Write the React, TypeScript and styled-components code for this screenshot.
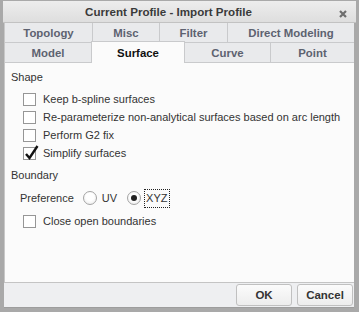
import React from 'react';
import styled, { createGlobalStyle } from 'styled-components';

const GlobalStyle = createGlobalStyle`
    html, body {
        margin: 0;
        padding: 0;
        background: #ffffff;
    }
    * {
        box-sizing: border-box;
    }
`;

const Window = styled.div`
    width: 359px;
    height: 312px;
    background: #a9a9a9;
    padding: 1px 5px 4px 4px;
    display: flex;
    flex-direction: column;
    font-family: "Liberation Sans", Arial, sans-serif;
    color: #333333;
`;

const TitleBar = styled.div`
    height: 22px;
    flex: none;
    position: relative;
    display: flex;
    align-items: center;
    justify-content: center;
    margin: 0 -2px 0 -1px;
    padding-right: 22px;
    background: linear-gradient(#ededed, #dedede);
    border-bottom: 1px solid #c2c2c2;
    font-size: 11.6px;
    font-weight: bold;
    color: #3a3a3a;
`;

const CloseButton = styled.svg`
    position: absolute;
    right: 9px;
    top: 9px;
`;

const Body = styled.div`
    flex: 1;
    display: flex;
    flex-direction: column;
    background: #fbfbfb;
    border-left: 1px solid #c8c8c8;
`;

const TabRow = styled.div<{ $cols: string }>`
    display: grid;
    grid-template-columns: ${p => p.$cols};
    height: 20px;
    flex: none;
    background: #e9eaec;
    border-bottom: 1px solid #c9cacc;
`;

const Tab = styled.div<{ $selected?: boolean; $last?: boolean }>`
    display: flex;
    align-items: center;
    justify-content: center;
    font-size: 11.4px;
    font-weight: bold;
    color: ${p => (p.$selected ? '#111111' : '#5d6270')};
    border-right: ${p => (p.$last ? 'none' : '1px solid #c9cacc')};
    background: ${p => (p.$selected ? '#fbfbfb' : 'transparent')};
    ${p => p.$selected && `
        margin-top: -2px;
        margin-bottom: -1px;
        margin-left: -1px;
        border-left: 1px solid #c9cacc;
        border-top: 1px solid #c9cacc;
        padding-top: 1px;
    `}
`;

const Content = styled.div`
    flex: 1;
    display: flex;
    flex-direction: column;
    padding: 6px 0 0 6px;
`;

const SectionLabel = styled.div<{ $gap?: number }>`
    font-size: 11px;
    line-height: 16px;
    height: 16px;
    margin-top: ${p => p.$gap || 0}px;
`;

const Group = styled.div<{ $gap?: number }>`
    display: flex;
    flex-direction: column;
    padding-left: 12px;
    margin-top: ${p => p.$gap || 0}px;
`;

const CheckRow = styled.div`
    display: flex;
    align-items: center;
    gap: 7px;
    height: 18px;
    font-size: 11px;
`;

const Box = styled.span`
    position: relative;
    width: 13px;
    height: 13px;
    flex: none;
    background: #ffffff;
    border: 1px solid #969696;
`;

const CheckMark = styled.svg`
    position: absolute;
    left: 1px;
    top: -3px;
`;

const RadioRow = styled.div<{ $gap?: number }>`
    display: flex;
    align-items: center;
    height: 20px;
    font-size: 11px;
    padding-left: 9px;
    margin-top: ${p => p.$gap || 0}px;
`;

const RowLabel = styled.span`
    margin-right: 9px;
`;

const RadioLabel = styled.span<{ $focus?: boolean }>`
    margin: 0 8px 0 3px;
    padding: 1px 1px;
    border: 1px dotted ${p => (p.$focus ? '#222222' : 'transparent')};
    line-height: 15px;
`;

const Radio = styled.span<{ $on?: boolean }>`
    width: 14px;
    height: 14px;
    flex: none;
    border-radius: 50%;
    border: 1px solid #a4a4a4;
    background: radial-gradient(circle at 50% 40%, #ffffff 40%, #e6e6e6);
    display: flex;
    align-items: center;
    justify-content: center;
    &::after {
        content: '';
        display: ${p => (p.$on ? 'block' : 'none')};
        width: 6px;
        height: 6px;
        border-radius: 50%;
        background: #222222;
    }
`;

const ButtonBar = styled.div`
    height: 26px;
    flex: none;
    display: flex;
    align-items: center;
    justify-content: flex-end;
    gap: 5px;
    padding-right: 1px;
    margin-left: -1px;
    background: #eeeff1;
    border-top: 1px solid #c4c4c4;
    border-bottom: 1px solid #9d9d9d;
`;

const Button = styled.button<{ $w: number }>`
    width: ${p => p.$w}px;
    height: 22px;
    border: 1px solid #c0c0c0;
    border-radius: 3px;
    background: linear-gradient(#fbfbfb, #ededed);
    font-family: "Liberation Sans", Arial, sans-serif;
    font-size: 11.5px;
    font-weight: bold;
    color: #333333;
    padding: 0;
`;

const topTabs = ['Topology', 'Misc', 'Filter', 'Direct Modeling'];
const bottomTabs = ['Model', 'Surface', 'Curve', 'Point'];

const shapeOptions = [
    { label: 'Keep b-spline surfaces', checked: false },
    { label: 'Re-parameterize non-analytical surfaces based on arc length', checked: false },
    { label: 'Perform G2 fix', checked: false },
    { label: 'Simplify surfaces', checked: true },
];

function Checkbox({ label, checked }: { label: string; checked: boolean }) {
    return (
        <CheckRow>
            <Box>
                {checked && (
                    <CheckMark width="14" height="15" viewBox="0 0 14 15">
                        <path d="M1 9 L4.5 13 L12.5 1" fill="none" stroke="#111" strokeWidth="2.4" strokeLinejoin="miter" />
                    </CheckMark>
                )}
            </Box>
            {label}
        </CheckRow>
    );
}

export default function App() {
    return (
        <>
            <GlobalStyle />
            <Window>
                <TitleBar>
                    Current Profile - Import Profile
                    <CloseButton width="8" height="8" viewBox="0 0 8 8">
                        <path d="M1 1 L7 7 M7 1 L1 7" stroke="#6e6e6e" strokeWidth="2.2" />
                    </CloseButton>
                </TitleBar>
                <Body>
                    <TabRow $cols="88px 67px 68px 1fr">
                        {topTabs.map((t, i) => (
                            <Tab key={t} $last={i === topTabs.length - 1}>{t}</Tab>
                        ))}
                    </TabRow>
                    <TabRow $cols="87px 93px 86px 1fr">
                        {bottomTabs.map((t, i) => (
                            <Tab key={t} $selected={t === 'Surface'} $last={i === bottomTabs.length - 1}>{t}</Tab>
                        ))}
                    </TabRow>
                    <Content>
                        <SectionLabel>Shape</SectionLabel>
                        <Group $gap={5}>
                            {shapeOptions.map(o => (
                                <Checkbox key={o.label} label={o.label} checked={o.checked} />
                            ))}
                        </Group>
                        <SectionLabel $gap={5}>Boundary</SectionLabel>
                        <RadioRow $gap={5}>
                            <RowLabel>Preference</RowLabel>
                            <Radio />
                            <RadioLabel>UV</RadioLabel>
                            <Radio $on />
                            <RadioLabel $focus>XYZ</RadioLabel>
                        </RadioRow>
                        <Group $gap={4}>
                            <Checkbox label="Close open boundaries" checked={false} />
                        </Group>
                    </Content>
                    <ButtonBar>
                        <Button $w={56}>OK</Button>
                        <Button $w={56}>Cancel</Button>
                    </ButtonBar>
                </Body>
            </Window>
        </>
    );
}
